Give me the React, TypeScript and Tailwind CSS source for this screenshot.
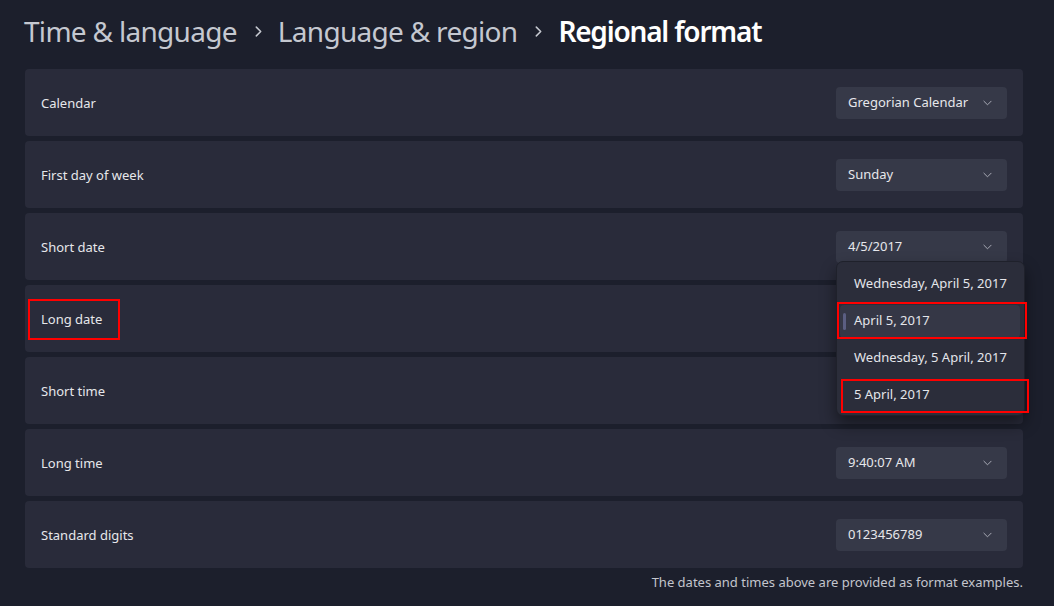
import type React from 'react'

const FONT = "font-['Noto_Sans',_'Liberation_Sans',_sans-serif]"

type Row = { label: string; value: string; boxed?: boolean; open?: boolean }

const ROWS: Row[] = [
  { label: 'Calendar', value: 'Gregorian Calendar' },
  { label: 'First day of week', value: 'Sunday' },
  { label: 'Short date', value: '4/5/2017', open: true },
  { label: 'Long date', value: 'April 5, 2017', boxed: true },
  { label: 'Short time', value: '9:40 AM' },
  { label: 'Long time', value: '9:40:07 AM' },
  { label: 'Standard digits', value: '0123456789' },
]

const OPTIONS = [
  { text: 'Wednesday, April 5, 2017' },
  { text: 'April 5, 2017', selected: true, boxed: 'a' },
  { text: 'Wednesday, 5 April, 2017' },
  { text: '5 April, 2017', boxed: 'b' },
]

const Chevron: React.FC<{ className?: string }> = ({ className }) => (
  <svg viewBox="0 0 10 6" className={className} fill="none">
    <path d="M1 1l4 4 4-4" stroke="currentColor" strokeWidth="1.1" strokeLinecap="round" strokeLinejoin="round" />
  </svg>
)

const BreadcrumbSep = () => (
  <svg viewBox="0 0 6 10" className="w-[7px] h-[11px] text-[#c5c8d0] ml-[18px] mr-[16px] mt-[2px]" fill="none">
    <path d="M1 1l4 4-4 4" stroke="currentColor" strokeWidth="1.4" strokeLinecap="round" strokeLinejoin="round" />
  </svg>
)

// 展开的下拉列表，盖在下面两行之上
const DatePopup = () => (
  <div className="absolute left-0 top-[30px] w-[189px] h-[155px] rounded-[7px] bg-[#2b2d3a] border border-[#1f212b] shadow-[0_8px_16px_rgba(0,0,0,0.45)] py-[4px] z-10">
    {OPTIONS.map((o) => (
      <div key={o.text} className="relative h-[37px] flex items-center">
        {o.selected && (
          <div className="absolute left-[3px] right-[4px] top-[2px] bottom-[2px] rounded-[4px] bg-[#353746]">
            <div className="absolute left-[3px] top-[8px] w-[3px] h-[17px] rounded-full bg-[#5b5e82]" />
          </div>
        )}
        <span className="relative pl-[17px] text-[13px] text-[#e4e5ea]">{o.text}</span>
        {o.boxed === 'a' && (
          <div className="absolute left-0 -right-[3px] -top-[1px] h-[37px] border-2 border-[#ff0000]" />
        )}
        {o.boxed === 'b' && (
          <div className="absolute left-[4px] -right-[5px] top-[2px] h-[34px] border-2 border-[#ff0000]" />
        )}
      </div>
    ))}
  </div>
)

const SettingRow: React.FC<{ row: Row }> = ({ row }) => (
  <div className="h-[67px] rounded-[4px] bg-[#292b3a] flex items-center justify-between pl-[16px] pr-[16px]">
    <div className="relative">
      <span className="block text-[13px] leading-[20px] text-[#e6e7eb]">{row.label}</span>
      {row.boxed && (
        <div className="absolute -left-[13px] -right-[18px] -top-[10px] -bottom-[11px] border-2 border-[#ff0000]" />
      )}
    </div>
    <div className="relative">
      <div className="w-[171px] h-[32px] rounded-[4px] bg-[#363948] flex items-center justify-between pl-[12px] pr-[15px]">
        <span className="text-[13px] text-[#e6e7eb]">{row.value}</span>
        <Chevron className="w-[9px] h-[6px] text-[#a9abb6]" />
      </div>
      {row.open && <DatePopup />}
    </div>
  </div>
)

export default function App() {
  return (
    <div className={`${FONT} w-[1054px] h-[606px] bg-[#1c1f2c] pl-[24px] pr-[31px] overflow-hidden`}>
      <div className="h-[69px] flex items-center pb-[8px]">
        <span className="text-[28px] text-[#c5c8d0] tracking-[-0.7px]">Time &amp; language</span>
        <BreadcrumbSep />
        <span className="text-[28px] text-[#c5c8d0] tracking-[-0.7px]">Language &amp; region</span>
        <BreadcrumbSep />
        <span className="text-[28px] text-white font-semibold tracking-[-1.2px]">Regional format</span>
      </div>
      <div className="flex flex-col gap-[5px] pl-[1px]">
        {ROWS.map((r) => (
          <SettingRow key={r.label} row={r} />
        ))}
      </div>
      <div className="flex justify-end pt-[5px]">
        <span className="text-[13px] text-[#c3c5cd]">The dates and times above are provided as format examples.</span>
      </div>
    </div>
  )
}
